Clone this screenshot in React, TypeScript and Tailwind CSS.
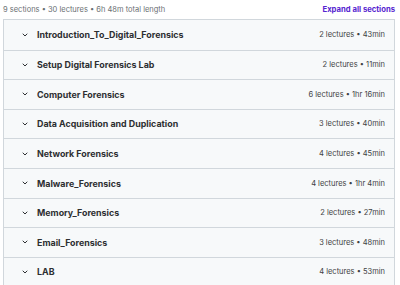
const sections = [
  { title: "Introduction_To_Digital_Forensics", meta: "2 lectures • 43min" },
  { title: "Setup Digital Forensics Lab", meta: "2 lectures • 11min" },
  { title: "Computer Forensics", meta: "6 lectures • 1hr 16min" },
  { title: "Data Acquisition and Duplication", meta: "3 lectures • 40min" },
  { title: "Network Forensics", meta: "4 lectures • 45min" },
  { title: "Malware_Forensics", meta: "4 lectures • 1hr 4min" },
  { title: "Memory_Forensics", meta: "2 lectures • 27min" },
  { title: "Email_Forensics", meta: "3 lectures • 48min" },
  { title: "LAB", meta: "4 lectures • 53min" },
];

const Chevron = () => (
  <svg width="8" height="8" viewBox="0 0 24 24" fill="none" stroke="#2d2f31" strokeWidth="3" strokeLinecap="round" strokeLinejoin="round">
    <path d="M6 9l6 6 6-6" />
  </svg>
);

export default function App() {
  return (
    <div className="w-[400px] h-[285px] overflow-hidden bg-white text-[#2d2f31]" style={{ fontFamily: "Inter, 'Noto Sans', sans-serif" }}>
      <div className="flex items-center justify-between pl-[3px] pr-[5px] h-[19px]">
        <span className="text-[7.5px] text-[#6a6f73]">9 sections • 30 lectures • 6h 48m total length</span>
        <span className="text-[7.7px] font-bold text-[#5624d0]">Expand all sections</span>
      </div>
      <div className="ml-[3px] w-[392px] border border-[#d1d7dc]">
        {sections.map((s, i) => (
          <div
            key={i}
            className={"flex items-center h-[29.6px] bg-[#f7f9fa] pl-[17px] pr-[9px] " + (i > 0 ? "border-t border-[#d1d7dc]" : "")}
          >
            <Chevron />
            <span className="ml-[8px] text-[8.9px] font-bold">{s.title}</span>
            <span className="ml-auto text-[7.5px] text-[#3e4143]">{s.meta}</span>
          </div>
        ))}
      </div>
    </div>
  );
}
